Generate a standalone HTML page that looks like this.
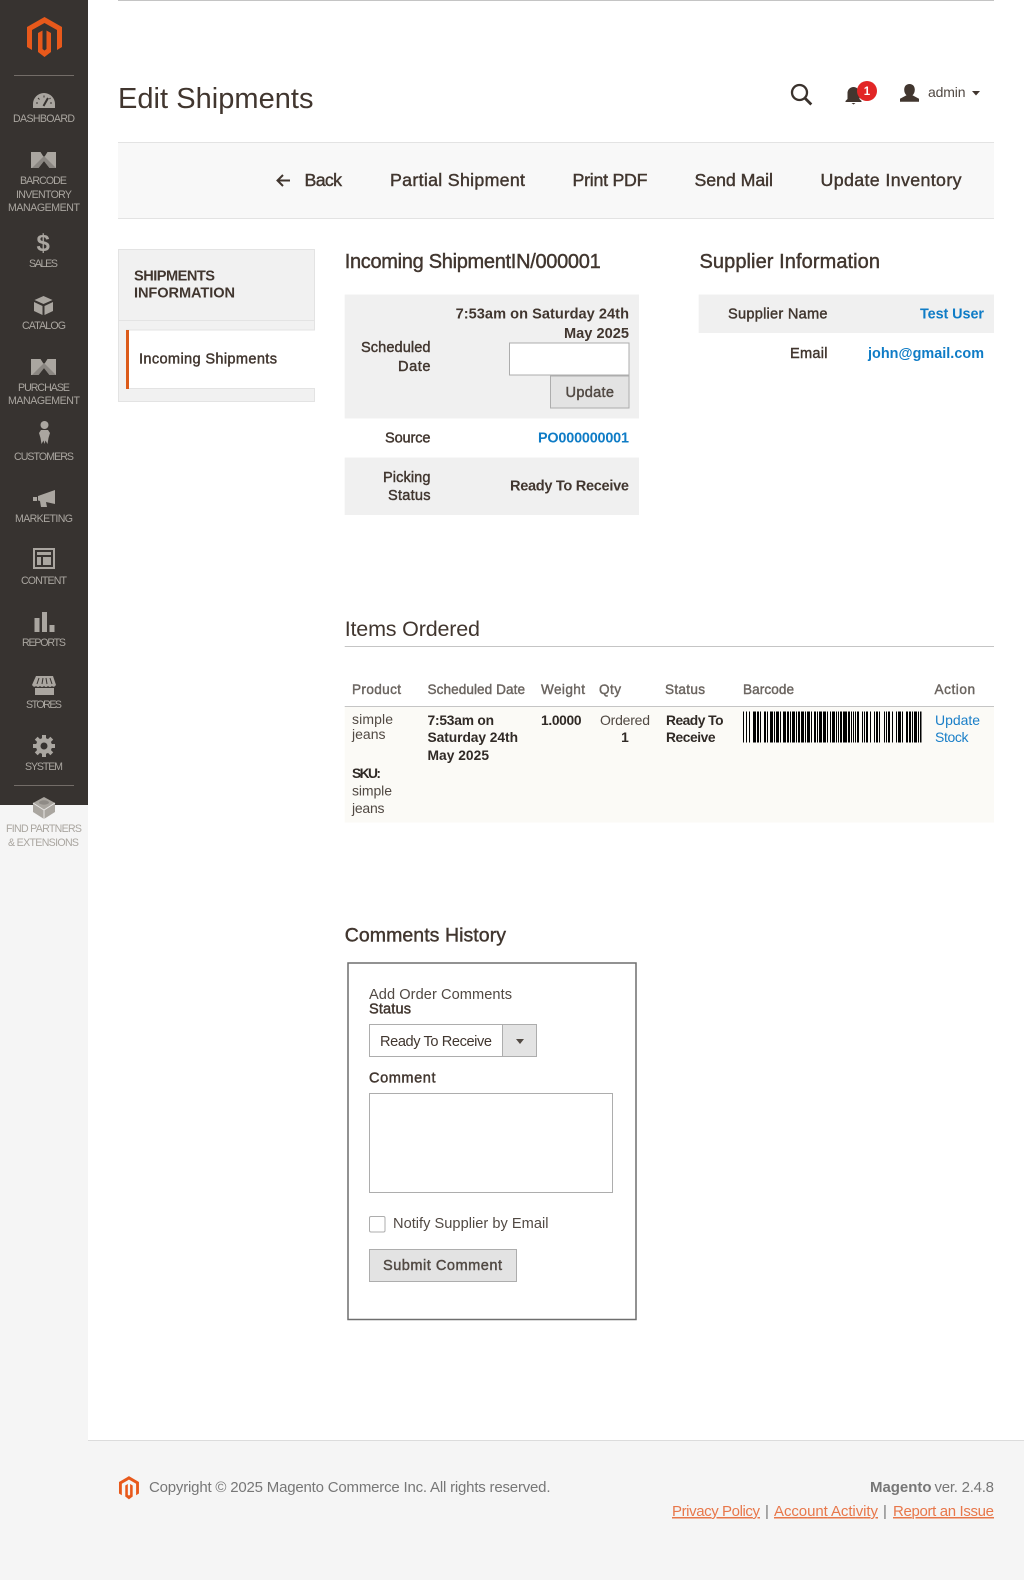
<!DOCTYPE html>
<html lang="en"><head><meta charset="utf-8"><title>Edit Shipments</title>
<style>
html,body{margin:0;padding:0;background:#fff}
svg{display:block;font-family:"Liberation Sans",Arial,sans-serif}
.s{stroke:currentColor;stroke-width:.42px}
.nav{fill:#aaa6a0;font-size:10.6px}
.lab{fill:#41362f;color:#41362f;font-size:14.6px}
.b{font-weight:700}
.tb{fill:#41362f;color:#41362f;font-size:17.8px}
.blue{fill:#0f7cc6;font-weight:700;font-size:14.4px}
.th{fill:#6b6560;color:#6b6560;font-size:13.6px}
.td{fill:#514943;font-size:14px}
.tdb{fill:#302a26;font-size:13.8px;font-weight:700}
.ft{fill:#777;font-size:15px}
.lk{fill:#e8774a;font-size:15px;text-decoration:underline}
</style></head><body>
<svg xmlns="http://www.w3.org/2000/svg" width="1024" height="1580" viewBox="0 0 1024 1580">
<defs>
<g id="mg"><path fill="#e8591b" d="M44.5 17 62 27V47L57 50V30L44.5 23 32 30V50L27 47V27Z"/><path fill="#e8591b" d="M38 33 42.5 30.5V49L44.5 50.5 46.5 49V30.5L51 33V52L44.5 57 38 52Z"/></g>
<g id="wi"><path fill="#aaa6a0" d="M31 152h9.500l3.500 5.500 3.500-5.500H56v16h-6.500l-5.500-7-5.500 7H31Z"/><path fill="#8a8681" d="M38.500 168l5.500-7 5.500 7 6.500 0-5-5-7-7-7 7-5 5Z"/></g>
</defs>
<rect width="1024" height="1580" fill="#fff"/>
<rect x="0" y="0" width="88" height="1440" fill="#f5f5f5"/>
<rect x="0" y="1440" width="1024" height="140" fill="#f5f5f5"/>
<rect x="88" y="1440" width="936" height="1" fill="#dcdcdc"/>
<rect x="0" y="0" width="88" height="805" fill="#373330"/>

<use href="#mg"/>
<rect x="14" y="75" width="60" height="1" fill="#736d68"/>

<path fill="#aaa6a0" d="M33 108v-4a11 11 0 0 1 22 0v4Z"/><path d="M43.500 106l4.500-8" stroke="#373330" stroke-width="2"/><path d="M36 103h2M38 98l1.500 1.500M44 95.500v2M50.500 98l-1 1M50 103h2" stroke="#373330" stroke-width="1"/>
<text class="nav" x="13" y="122" textLength="62">DASHBOARD</text>
<use href="#wi"/>
<text class="nav" x="20" y="184" textLength="47">BARCODE</text>
<text class="nav" x="16" y="198" textLength="56">INVENTORY</text>
<text class="nav" x="8" y="211" textLength="72">MANAGEMENT</text>
<text x="36.500" y="251" fill="#aaa6a0" font-size="24" font-weight="700" textLength="14">$</text>
<text class="nav" x="29" y="267" textLength="29">SALES</text>
<path fill="#aaa6a0" d="M43.500 296l9 4-9 4-9-4ZM34 302l8.500 4v9l-8.500-4ZM53 302l-8.500 4v9l8.500-4Z"/>
<text class="nav" x="22" y="329" textLength="44">CATALOG</text>
<use href="#wi" transform="translate(0 207)"/>
<text class="nav" x="18" y="391" textLength="52">PURCHASE</text>
<text class="nav" x="8" y="404" textLength="72">MANAGEMENT</text>
<circle cx="44.500" cy="425" r="4" fill="#aaa6a0"/><path fill="#aaa6a0" d="M41 430h7l2 3-1.500 5-1 6-2-3.500-1 3.500-1-3.500-2 3.500-1-6-1.500-5Z"/>
<text class="nav" x="14" y="460" textLength="60">CUSTOMERS</text>
<path fill="#aaa6a0" d="M33 497h4v4h-4ZM38 496l17-6v14l-9-2 1 5h-6l-1-6-2-.5Z"/>
<text class="nav" x="15" y="522" textLength="58">MARKETING</text>
<path fill="#aaa6a0" fill-rule="evenodd" d="M33 548h22v21H33ZM35 550v17h18v-17ZM37 552h14v3H37ZM37 557h4v8h-4ZM43 557h8v8h-8Z"/>
<text class="nav" x="21" y="584" textLength="46">CONTENT</text>
<path fill="#aaa6a0" d="M34.500 618h5v14h-5ZM42 612h5v20h-5ZM49.500 625h5v7h-5Z"/>
<text class="nav" x="22" y="646" textLength="44">REPORTS</text>
<path fill="#aaa6a0" d="M36 676h17l3 9q-2 3-4 1-2 2-4 0-2 2-4 0-2 2-4 0-2 2-4 0-2 2-4-1ZM35 688h19v7H35Z"/><path d="M39 678l-2 6M43 678l-1 6M46 678l1 6M50 678l2 6" stroke="#373330" stroke-width="1"/>
<text class="nav" x="26" y="708" textLength="36">STORES</text>
<g fill="#aaa6a0"><circle cx="44" cy="746" r="8"/><path stroke="#aaa6a0" stroke-width="4" d="M44 735v22M33 746h22M36.200 738.200l15.600 15.600M51.800 738.200l-15.600 15.600"/></g><circle cx="44" cy="746" r="3.500" fill="#373330"/>
<text class="nav" x="25" y="770" textLength="38">SYSTEM</text>
<rect x="14" y="785" width="60" height="1" fill="#736d68"/>
<path fill="#aaa6a0" d="M44 797l11 6v9l-11 7-11-7v-9Z"/><path d="M33 803l11 7 11-7M44 810v9" fill="none" stroke="#e6e4e2" stroke-width="1"/><ellipse cx="44" cy="802.500" rx="5" ry="2.200" fill="#8f8b86"/>
<text class="nav" x="6" y="832" textLength="76">FIND PARTNERS</text>
<text class="nav" x="8" y="846" textLength="71">&amp; EXTENSIONS</text>

<rect x="118" y="0" width="876" height="1" fill="#c4c4c4"/>
<text x="118" y="108" fill="#41362f" font-size="29" textLength="195.500">Edit Shipments</text>

<circle cx="799.500" cy="92.500" r="7.500" fill="none" stroke="#3a322d" stroke-width="2.300"/><path d="M804.800 98l6.500 6.500" stroke="#3a322d" stroke-width="2.800" fill="none"/>
<path fill="#41362f" d="M853.500 87a6 6 0 0 1 6 6v6l2 2v1h-16v-1l2-2v-6a6 6 0 0 1 6-6ZM851.500 103h4l-2 1.500Z"/>
<circle cx="867" cy="91" r="10" fill="#e22626"/><text x="867" y="95" fill="#fff" font-size="11.500" font-weight="700" text-anchor="middle">1</text>
<path fill="#41362f" d="M909.500 84c3.500 0 5.300 2.500 5.300 5.800 0 2.400-1 4.300-2.300 5.500l6.500 3.500v3h-19v-3l6.500-3.500c-1.300-1.200-2.300-3.100-2.300-5.500 0-3.300 1.800-5.800 5.300-5.800Z"/>
<text x="928" y="97" fill="#514943" font-size="14" textLength="37.500">admin</text>
<path fill="#41362f" d="M972 91h8l-4 4.500Z"/>

<rect x="118" y="142" width="876" height="77" fill="#f8f8f8"/>
<rect x="118" y="142" width="876" height="1" fill="#e3e3e3"/><rect x="118" y="218" width="876" height="1" fill="#e3e3e3"/>
<path d="M290 180.500h-12M283 175l-5.500 5.500 5.500 5.500" fill="none" stroke="#41362f" stroke-width="2"/>
<text class="tb s" x="304.500" y="186" textLength="37.500">Back</text>
<text class="tb s" x="390" y="186" textLength="135">Partial Shipment</text>
<text class="tb s" x="572.500" y="186" textLength="75">Print PDF</text>
<text class="tb s" x="694.500" y="186" textLength="78.500">Send Mail</text>
<text class="tb s" x="820.500" y="186" textLength="141">Update Inventory</text>

<rect x="118.500" y="249.500" width="196" height="152" fill="#f1f1f1" stroke="#e3e3e3"/>
<rect x="119" y="320" width="195" height="1" fill="#e3e3e3"/>
<rect x="126" y="330" width="189" height="58" fill="#fff"/>
<rect x="126" y="329.500" width="189" height="1" fill="#e3e3e3"/><rect x="126" y="388" width="189" height="1" fill="#e3e3e3"/>
<rect x="126" y="330" width="3" height="59" fill="#dc5b1a"/>
<text x="134" y="280.500" class="lab b" textLength="81">SHIPMENTS</text>
<text x="134" y="297.500" class="lab b" textLength="101">INFORMATION</text>
<text x="139" y="363.500" class="lab s" textLength="138">Incoming Shipments</text>

<text x="344.700" y="268" fill="#41362f" color="#41362f" class="s" font-size="20" textLength="256">Incoming ShipmentIN/000001</text>
<text x="699.500" y="268" fill="#41362f" color="#41362f" class="s" font-size="20" textLength="180.500">Supplier Information</text>

<rect x="344.700" y="294.500" width="294.300" height="124" fill="#f0f0f0"/>
<rect x="344.700" y="457.500" width="294.300" height="57.500" fill="#f0f0f0"/>
<text x="455.600" y="318.700" class="lab b" fill="#302a26" textLength="173.400">7:53am on Saturday 24th</text>
<text x="564" y="338" class="lab b" textLength="65">May 2025</text>
<rect x="509.500" y="343" width="119.500" height="32" fill="#fff" stroke="#adadad"/>
<rect x="550.500" y="376" width="78.500" height="32" fill="#e3e3e3" stroke="#adadad"/>
<text x="565.500" y="397" fill="#514943" color="#514943" class="s" font-size="14.600" textLength="48.500">Update</text>
<text x="361" y="351.800" class="lab s" textLength="69.500">Scheduled</text>
<text x="398" y="370.800" class="lab s" textLength="32.500">Date</text>
<text x="385" y="442.700" class="lab s" textLength="45.500">Source</text>
<text x="538" y="442.700" class="blue" textLength="91">PO000000001</text>
<text x="383" y="482" class="lab s" textLength="47.500">Picking</text>
<text x="388" y="500" class="lab s" textLength="42.500">Status</text>
<text x="510" y="490.300" class="lab b" textLength="119">Ready To Receive</text>

<rect x="698.700" y="294.500" width="295.300" height="38.500" fill="#f0f0f0"/>
<text x="728" y="318.700" class="lab s" textLength="99.500">Supplier Name</text>
<text x="920" y="318.700" class="blue" textLength="64">Test User</text>
<text x="790" y="358.200" class="lab s" textLength="37.500">Email</text>
<text x="868" y="358.200" class="blue" textLength="116">john@gmail.com</text>

<text x="344.700" y="636" fill="#41362f" font-size="21.500" textLength="135.300">Items Ordered</text>
<rect x="344.700" y="646" width="649.300" height="1" fill="#c5c5c5"/>
<text x="352" y="694" class="th s" textLength="49">Product</text>
<text x="427.500" y="694" class="th s" textLength="97.500">Scheduled Date</text>
<text x="541" y="694" class="th s" textLength="44">Weight</text>
<text x="599" y="694" class="th s" textLength="22">Qty</text>
<text x="665" y="694" class="th s" textLength="40">Status</text>
<text x="743" y="694" class="th s" textLength="51">Barcode</text>
<text x="934.500" y="694" class="th s" textLength="40.500">Action</text>
<rect x="344.700" y="707" width="649.300" height="115.500" fill="#fbfaf6"/>
<rect x="344.700" y="706" width="649.300" height="1" fill="#c5c5c5"/>
<text x="352" y="724" class="td" textLength="41">simple</text>
<text x="352" y="739" class="td" textLength="33.500">jeans</text>
<text x="352" y="778" class="tdb" textLength="29">SKU:</text>
<text x="352" y="795.500" class="td" textLength="40">simple</text>
<text x="352" y="813" class="td" textLength="32.500">jeans</text>
<text x="427.500" y="725" class="tdb" textLength="66.500">7:53am on</text>
<text x="427.500" y="742" class="tdb" textLength="90.500">Saturday 24th</text>
<text x="427.500" y="760" class="tdb" textLength="61.500">May 2025</text>
<text x="541" y="725" class="tdb" textLength="40.500">1.0000</text>
<text x="600" y="725" class="td" textLength="50">Ordered</text>
<text x="625" y="742" class="tdb" text-anchor="middle">1</text>
<text x="666" y="725" class="tdb" textLength="57.500">Ready To</text>
<text x="666" y="742" class="tdb" textLength="49.500">Receive</text>
<path d="M743 727h178.500" fill="none" stroke="#000" stroke-width="31" stroke-dasharray="1 2 1 2 1 3 3 1 2 1 1 3 2 1 1 2 3 1 1 1 3 1 1 2 3 1 2 1 1 1 3 1 1 1 2 1 3 1 1 1 3 1 1 2 2 1 1 1 3 1 3 1 1 2 1 1 3 1 1 1 1 1 2 1 4 1 2 1 1 1 1 1 1 1 2 3 1 1 1 1 2 2 1 3 1 1 2 1 1 4 1 1 1 1 2 2 1 3 1 1 3 1 1 3 2 1 2 1 1 1 3 1 1 1 1.500 100"/>
<text x="935" y="725" fill="#1a7fc8" font-size="14" textLength="45">Update</text>
<text x="935" y="742" fill="#1a7fc8" font-size="14" textLength="33.500">Stock</text>

<text x="344.700" y="941.500" fill="#41362f" color="#41362f" class="s" font-size="19.500" textLength="161.300">Comments History</text>
<rect x="348" y="963" width="288" height="356.500" fill="#fff" stroke="#6e6e6e" stroke-width="1.500"/>
<text x="369" y="999" fill="#514943" font-size="14.600" textLength="143">Add Order Comments</text>
<text x="369" y="1013.500" class="lab s" textLength="42">Status</text>
<rect x="369.500" y="1024.500" width="167" height="32" fill="#fff" stroke="#adadad"/>
<rect x="502.500" y="1024.500" width="34" height="32" fill="#e3e3e3" stroke="#adadad"/>
<path fill="#514943" d="M516 1039h8l-4 5Z"/>
<text x="380" y="1045.800" fill="#41362f" font-size="14.600" textLength="112">Ready To Receive</text>
<text x="369" y="1082.500" class="lab s" textLength="66.500">Comment</text>
<rect x="369.500" y="1093.500" width="243" height="99" fill="#fff" stroke="#adadad"/>
<rect x="369.500" y="1216.500" width="15.500" height="15.500" rx="1.500" fill="#fff" stroke="#adadad"/>
<text x="393" y="1228" fill="#514943" font-size="14.600" textLength="155.500">Notify Supplier by Email</text>
<rect x="369.500" y="1249.500" width="147" height="32" fill="#e3e3e3" stroke="#adadad"/>
<text x="383" y="1270" fill="#514943" color="#514943" class="s" font-size="14.600" textLength="119">Submit Comment</text>

<use href="#mg" transform="translate(103.600 1466.300) scale(.57 .58)"/>
<text x="149" y="1492" class="ft" textLength="401.500">Copyright © 2025 Magento Commerce Inc. All rights reserved.</text>
<text x="870" y="1492" class="ft b" fill="#666" textLength="61.500">Magento</text>
<text x="934.500" y="1492" class="ft" textLength="59.500">ver. 2.4.8</text>
<text x="672" y="1516" class="lk" textLength="88">Privacy Policy</text>
<text x="765" y="1516" class="ft">|</text>
<text x="774" y="1516" class="lk" textLength="104">Account Activity</text>
<text x="883" y="1516" class="ft">|</text>
<text x="893" y="1516" class="lk" textLength="101">Report an Issue</text>
</svg>
</body></html>
